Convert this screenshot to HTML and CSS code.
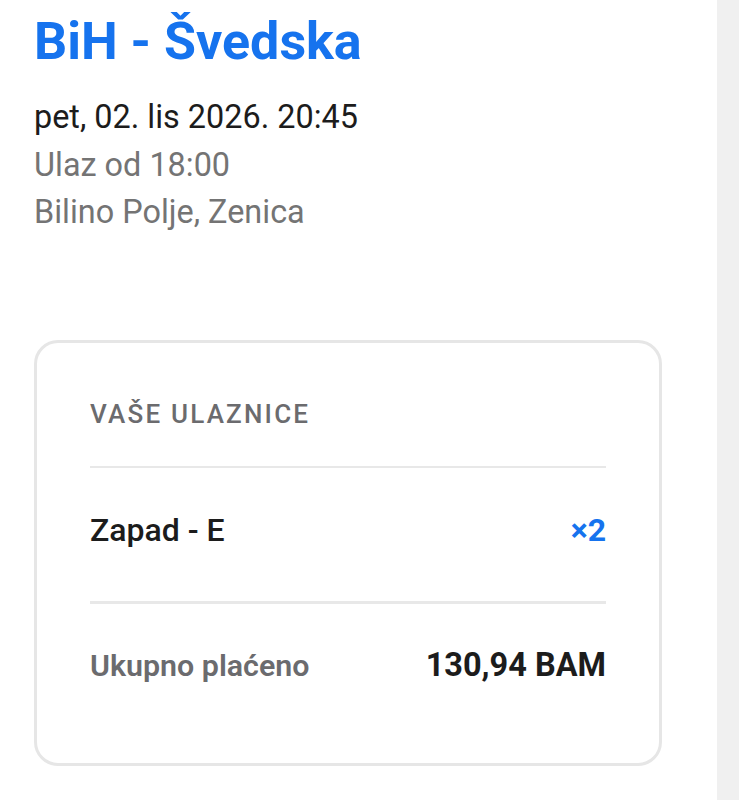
FILE: index.html
```html
<!DOCTYPE html>
<html lang="bs">

<head>
    <meta charset="UTF-8">
    <meta name="viewport" content="width=device-width, initial-scale=1.0">
    <title>BiH - Švedska</title>
    <link rel="stylesheet" href="styles.css">
</head>

<body>

    <div class="page">
        <main class="content">
            <h1 class="match-title">BiH - Švedska</h1>

            <div class="match-info">
                <p class="match-date">pet, 02. lis 2026. 20:45</p>
                <p class="match-meta">Ulaz od 18:00</p>
                <p class="match-meta">Bilino Polje, Zenica</p>
            </div>

            <section class="ticket-card">
                <h2 class="card-label">VAŠE ULAZNICE</h2>

                <div class="ticket-row">
                    <span class="ticket-name">Zapad - E</span>
                    <span class="ticket-qty">×2</span>
                </div>

                <div class="total-row">
                    <span class="total-label">Ukupno plaćeno</span>
                    <span class="total-value">130,94 BAM</span>
                </div>
            </section>
        </main>

        <div class="side-strip"></div>
    </div>

</body>

</html>
```

FILE: styles.css
```css
body {
    font-family: Roboto, "Noto Sans", Arial, sans-serif;
    background-color: #fff;
    margin: 0;
}

.page {
    display: flex;
    height: 100vh;
    overflow: hidden;
}

.content {
    flex: 1;
    padding: 12px 55px 0 34px;
}

.side-strip {
    width: 22px;
    background-color: #f0f0f0;
}

.match-title {
    margin: 0;
    font-size: 52px;
    line-height: 60px;
    font-weight: 700;
    color: #1673ee;
}

.match-info {
    margin-top: 22px;
}

.match-info p {
    margin: 0;
    font-size: 32.4px;
    line-height: 47.5px;
}

.match-date {
    color: #1c1c1c;
}

.match-meta {
    color: #747474;
}

.ticket-card {
    margin-top: 103px;
    border: 3px solid #e6e6e6;
    border-radius: 24px;
    padding: 57px 53px 80px;
}

.card-label {
    margin: 0;
    font-size: 26px;
    line-height: 28px;
    font-weight: 500;
    letter-spacing: 2.2px;
    color: #6b6b6e;
    padding-bottom: 38px;
    border-bottom: 2px solid #e8e8e8;
}

.ticket-row,
.total-row {
    display: flex;
    justify-content: space-between;
    align-items: baseline;
    font-size: 32px;
    line-height: 34px;
}

.ticket-row {
    padding: 45px 0 54px;
    border-bottom: 3px solid #e8e8e8;
}

.total-row {
    padding-top: 44px;
}

.ticket-name {
    font-weight: 500;
    color: #1c1c1c;
}

.ticket-qty {
    font-weight: 700;
    color: #1673ee;
}

.total-label {
    font-size: 30.4px;
    font-weight: 600;
    color: #6b6b6e;
}

.total-value {
    font-size: 32.5px;
    font-weight: 700;
    color: #1c1c1c;
}
```
